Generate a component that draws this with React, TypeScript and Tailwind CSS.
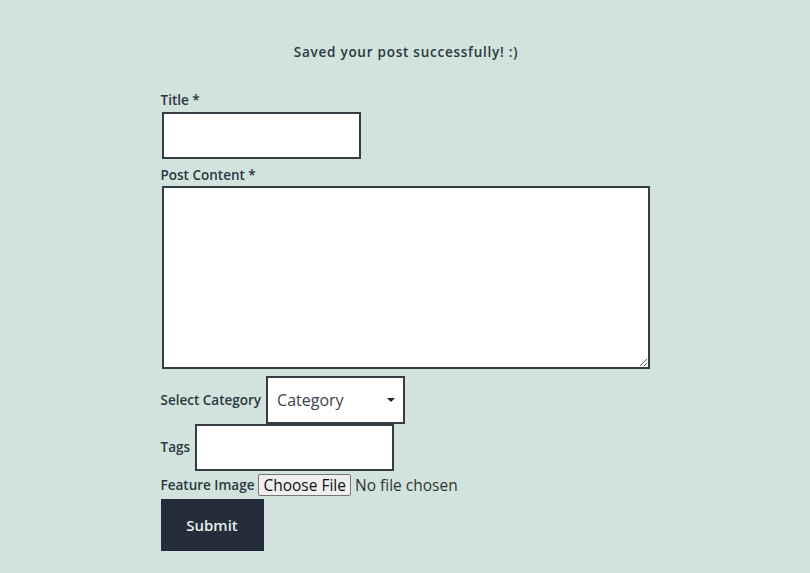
export default function App() {
  return (
    <main
      className="min-h-[573px] bg-[#d2e3de] text-[#2d3740]"
      style={{ fontFamily: '"Open Sans", "Noto Sans", sans-serif' }}
    >
      <div className="w-[489px] mx-auto pt-[42px]">
        {/* Status message */}
        <p className="text-center text-[13.5px] font-semibold tracking-[0.75px] leading-5 ml-[2px]">
          Saved your post successfully! :)
        </p>

        <form className="mt-[29px] flex flex-col" onSubmit={(e) => e.preventDefault()}>
          <label className="text-[13.5px] font-semibold leading-[18px]">Title *</label>
          <input
            type="text"
            className="ml-px mt-[3px] w-[199px] h-[47px] bg-white border-2 border-[#353d44] outline-none"
          />

          <label className="mt-[7px] text-[13.5px] font-semibold leading-[18px]">Post Content *</label>
          <textarea className="ml-px mt-[2px] w-[488px] h-[183px] bg-white border-2 border-[#353d44] outline-none block" />

          <div className="mt-[7px] flex items-center gap-[5px]">
            <span className="text-[13.5px] font-semibold">Select Category</span>
            <div className="relative">
              <select className="appearance-none w-[139px] h-[48px] bg-white border-2 border-[#353d44] pl-[9px] text-[16px] text-[#3a434b] outline-none">
                <option>Category</option>
              </select>
              <span className="pointer-events-none absolute right-[10px] top-[22px] w-0 h-0 border-l-[4px] border-r-[4px] border-t-[4px] border-l-transparent border-r-transparent border-t-[#222]" />
            </div>
          </div>

          <div className="flex items-center gap-[5px]">
            <span className="text-[13.5px] font-semibold">Tags</span>
            <input
              type="text"
              className="w-[199px] h-[47px] bg-white border-2 border-[#353d44] outline-none"
            />
          </div>

          <div className="flex items-center gap-[4px] h-[28px]">
            <span className="text-[13.5px] font-semibold">Feature Image</span>
            <input type="file" className="text-[15.5px] leading-[20px] text-[#333] file:mr-[4px] file:px-[4px] file:py-0 file:border file:border-[#767676] file:bg-[#efefef] file:rounded-[2px] file:text-[#111]" />
          </div>

          <button
            type="submit"
            className="w-[103px] h-[52px] bg-[#252d3a] text-[#e6efec] text-[15px] font-semibold"
          >
            Submit
          </button>
        </form>
      </div>
    </main>
  )
}
